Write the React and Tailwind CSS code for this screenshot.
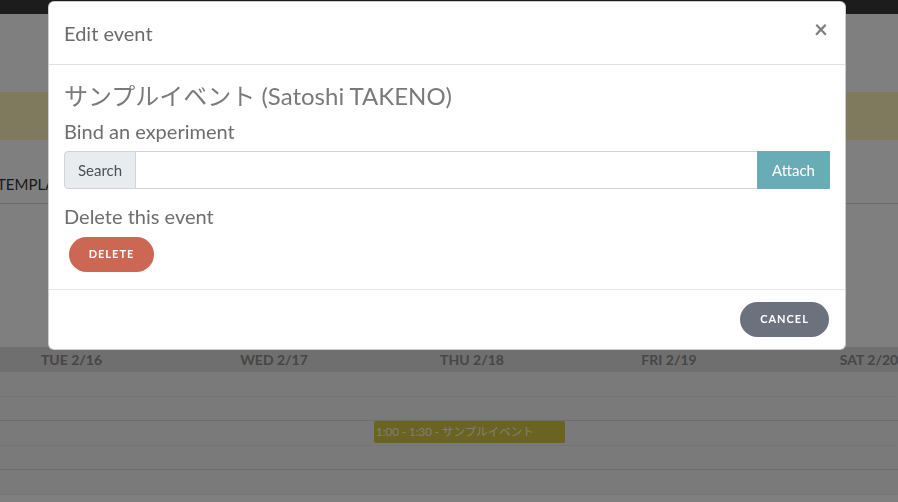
import React from 'react';

const days = ['TUE 2/16', 'WED 2/17', 'THU 2/18', 'FRI 2/19', 'SAT 2/20'];
const rows = [
    { line: 'border-dotted' },
    { line: 'border-solid' },
    { line: 'border-dotted', event: true },
    { line: 'border-solid' },
    { line: 'border-dotted' },
];

export default function App() {
    return (
        <div className="relative w-[898px] h-[502px] overflow-hidden bg-white font-['Lato','Noto_Sans_CJK_JP',sans-serif]">
            {/* ── Page behind the backdrop ───────────── */}
            <div className="h-[14px] bg-[#383838]" />
            <div className="h-[78px]" />
            <div className="h-[48px] bg-[#fef4ba]" />
            <div className="h-[63px] flex items-end pb-[8px]">
                <span className="ml-[-3px] text-[15px] text-[#333]">TEMPLATES</span>
            </div>
            <div className="h-[144px] border-t border-[#d4d4d4]" />
            <div className="ml-[-31px] w-[1000px]">
                <div className="grid grid-cols-[205px_200px_196px_198px_202px] h-[25px] bg-[#dedede]">
                    {days.map((d) => (
                        <div key={d} className="flex items-center justify-center text-[14px] font-bold text-[#8c8c8c]">{d}</div>
                    ))}
                </div>
                {rows.map((r, i) => (
                    <div key={i} className={`grid grid-cols-[205px_200px_196px_198px_202px] h-[24.5px] bg-[#f5f5f5] border-b border-[#dcdcdc] ${r.line}`}>
                        <div />
                        <div />
                        <div className="pr-[5px]">
                            {r.event && (
                                <div className="h-[22px] rounded-[2px] bg-[#d6c644] px-[2px] text-[11.5px] leading-[22px] text-[#fffdf0] whitespace-nowrap">
                                    1:00 - 1:30 - サンプルイベント
                                </div>
                            )}
                        </div>
                        <div />
                        <div />
                    </div>
                ))}
            </div>

            {/* ── Backdrop ──────────────────────────── */}
            <div className="fixed inset-0 bg-black/50" />

            {/* ── Modal ─────────────────────────────── */}
            <div className="fixed left-[48px] top-[1px] w-[798px] rounded-[6px] bg-white border border-black/20">
                <div className="h-[63px] flex items-center justify-between px-[15px] border-b border-[#dee2e6]">
                    <h5 className="text-[20px] text-[#6b6b6b]">Edit event</h5>
                    <button className="mt-[-8px] mr-[2px] text-[24px] font-bold leading-none text-[#808080]">×</button>
                </div>
                <div className="px-[15px] pt-[16px] pb-[17px]">
                    <h3 className="text-[24px] leading-[29px] text-[#7a7a7a] mb-[9px]">サンプルイベント (Satoshi TAKENO)</h3>
                    <h4 className="text-[20px] leading-[24px] text-[#6e6e6e] mb-[8px]">Bind an experiment</h4>
                    <div className="flex h-[38px]">
                        <span className="w-[72px] flex items-center justify-center bg-[#e9ecef] border border-[#ced4da] rounded-l-[4px] text-[15px] text-[#495057]">Search</span>
                        <input type="text" className="flex-1 border-y border-[#ced4da] outline-none px-3 text-[15px]" />
                        <button className="w-[73px] bg-[#6aacb5] text-white text-[15px]">Attach</button>
                    </div>
                    <h4 className="mt-[15px] text-[20px] leading-[24px] text-[#6e6e6e] mb-[9px]">Delete this event</h4>
                    <button className="ml-[5px] h-[35px] w-[85px] rounded-full bg-[#cb6752] text-white text-[11px] font-bold tracking-[1px]">DELETE</button>
                </div>
                <div className="h-[60px] border-t border-[#e5e5e5] flex items-center justify-end pr-[16px]">
                    <button className="h-[35px] w-[89px] rounded-full bg-[#6c727d] text-white text-[11px] font-bold tracking-[1px]">CANCEL</button>
                </div>
            </div>
        </div>
    );
}
